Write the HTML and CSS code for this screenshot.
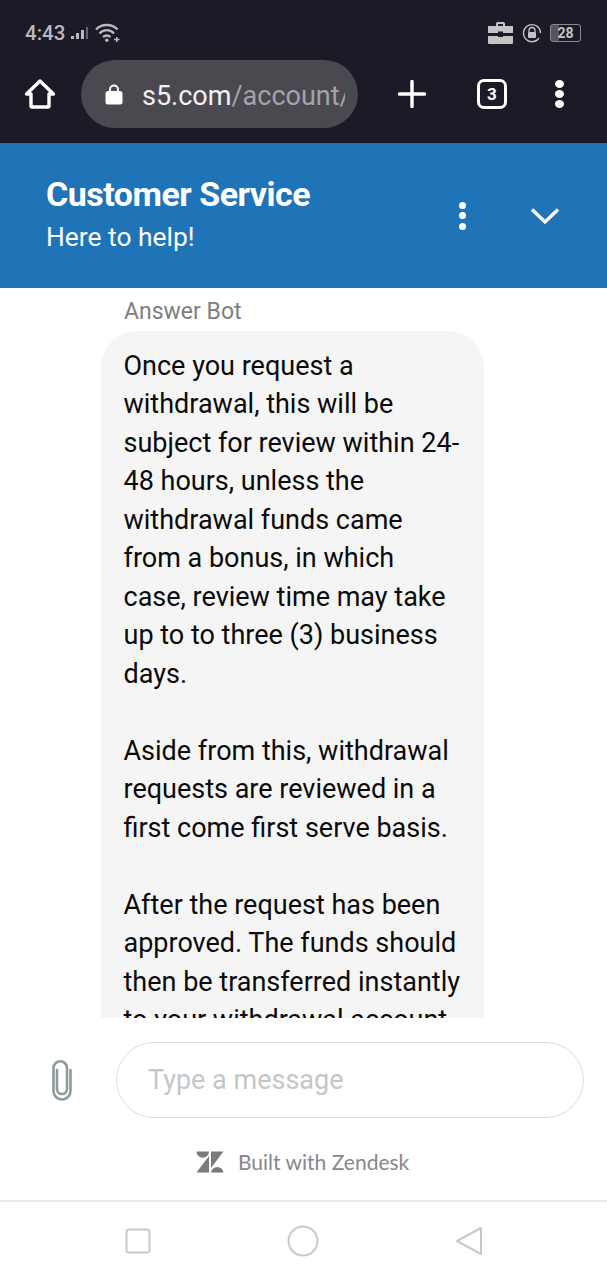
FILE: index.html
```html
<!DOCTYPE html>
<html lang="en">
<head>
  <meta charset="UTF-8">
  <meta name="viewport" content="width=device-width, initial-scale=1.0">
  <title>Customer Service</title>
  <link rel="stylesheet" href="styles.css">
</head>
<body>
  <div class="browser">
    <div class="status">
      <div class="status-side">
        <span class="time">4:43</span>
        <svg class="signal" width="18" height="14" viewBox="0 0 18 14">
          <rect x="0" y="10" width="3" height="3" fill="#b9b9bd"/>
          <rect x="5" y="7" width="3" height="6" fill="#b9b9bd"/>
          <rect x="10" y="4" width="3" height="9" fill="#b9b9bd"/>
          <rect x="15" y="1" width="2" height="12" fill="#66656d"/>
        </svg>
        <svg class="wifi" width="25" height="20" viewBox="0 0 25 20" fill="none" stroke="#b9b9bd" stroke-width="2.3">
          <path d="M1 6.5 C6.5 0.5 17 0.5 22.5 6.5"/>
          <path d="M4.5 10.5 C8.5 6 15 6 19 10.5"/>
          <path d="M8 14 C10.5 12 13 12 15.5 14"/>
          <circle cx="11.8" cy="17.2" r="1.7" fill="#b9b9bd" stroke="none"/>
          <path d="M19 16.5 H24.5 M21.8 14 V19" stroke-width="1.6"/>
        </svg>
      </div>
      <div class="status-side status-right">
        <svg width="27" height="24" viewBox="0 0 27 24">
          <path d="M9 5 V2.5 Q9 1 10.5 1 H16.5 Q18 1 18 2.5 V5 H16 V3 H11 V5 Z" fill="#c4c4c7"/>
          <path d="M1 5 H26 V12 H16 V10.5 H11 V12 H1 Z" fill="#c4c4c7"/>
          <path d="M1 15 H11 V16 H16 V15 H26 V22 Q26 23 25 23 H2 Q1 23 1 22 Z" fill="#c4c4c7"/>
        </svg>
        <svg class="rotate" width="20" height="20" viewBox="0 0 20 20" fill="none" stroke="#c4c4c7" stroke-width="1.4">
          <path d="M17 15 A8.5 8.5 0 1 1 18.5 10"/>
          <path d="M7 9 V7.5 A3 3 0 0 1 13 7.5 V9" stroke-width="1.3"/>
          <rect x="6" y="9" width="8" height="6" rx="1" fill="#c4c4c7" stroke="none"/>
        </svg>
        <div class="battery"><span class="battery-num">28</span></div>
      </div>
    </div>
    <div class="toolbar">
      <svg class="home" width="32" height="32" viewBox="0 0 32 32" fill="none" stroke="#fff" stroke-width="3.4" stroke-linejoin="round">
        <path d="M2.5 16 L16 3 L29.5 16 H25 V28 Q25 29 24 29 H8 Q7 29 7 28 V16 Z"/>
      </svg>
      <div class="url">
        <svg width="18" height="22" viewBox="0 0 18 22">
          <path d="M5 10 V6.5 A4 4 0 0 1 13 6.5 V10" fill="none" stroke="#fff" stroke-width="2"/>
          <rect x="0.5" y="8" width="17" height="13.5" rx="2.5" fill="#fff"/>
        </svg>
        <span class="url-text"><span class="url-host">s5.com</span>/account/</span>
      </div>
      <svg class="plus" width="28" height="28" viewBox="0 0 28 28" stroke="#fff" stroke-width="3.4" stroke-linecap="round">
        <path d="M1.5 14 H26.5 M14 1.5 V26.5"/>
      </svg>
      <div class="tabs">3</div>
      <div class="dots dots-big"><i></i><i></i><i></i></div>
    </div>
  </div>

  <header class="chat-head">
    <div class="chat-titles">
      <h1>Customer Service</h1>
      <p>Here to help!</p>
    </div>
    <div class="dots dots-small"><i></i><i></i><i></i></div>
    <svg class="chevron" width="30" height="18" viewBox="0 0 30 18" fill="none" stroke="#fff" stroke-width="3.4">
      <path d="M2 2.5 L15 15 L28 2.5"/>
    </svg>
  </header>

  <main class="messages">
    <div class="sender">Answer Bot</div>
    <div class="bubble">
      <p>Once you request a withdrawal, this will be subject for review within 24-48 hours, unless the withdrawal funds came from a bonus, in which case, review time may take up to to three (3) business days.</p>
      <p>Aside from this, withdrawal requests are reviewed in a first come first serve basis.</p>
      <p>After the request has been approved. The funds should then be transferred instantly to your withdrawal account</p>
    </div>
  </main>

  <footer class="composer">
    <div class="input-row">
      <svg class="clip" width="26" height="42" viewBox="0 0 26 42" fill="none" stroke="#8f9a9c" stroke-width="2.6" stroke-linecap="round">
        <path d="M8 10 V29 A5 5 0 0 0 18 29 V8 A6.5 6.5 0 0 0 4.5 8 V31 A8.5 8.5 0 0 0 21.5 31 V10" transform="translate(0 1)"/>
      </svg>
      <div class="input">Type a message</div>
    </div>
    <div class="built">
      <svg width="28" height="22" viewBox="0 0 28 22" fill="#7b7b7b">
        <path d="M0.5 0.5 H13 A6.25 6.25 0 0 1 0.5 0.5 Z"/>
        <path d="M13 5 V21.5 H0.5 Z"/>
        <path d="M15 0.5 H27.5 L15 17 Z"/>
        <path d="M15 21.5 A6.3 6.3 0 0 1 27.5 21.5 Z"/>
      </svg>
      <span>Built with Zendesk</span>
    </div>
  </footer>

  <nav class="navbar">
    <svg width="26" height="26" viewBox="0 0 26 26" fill="none" stroke="#c9c9c9" stroke-width="2">
      <rect x="1.5" y="1.5" width="23" height="23" rx="2.5"/>
    </svg>
    <svg width="32" height="32" viewBox="0 0 32 32" fill="none" stroke="#c9c9c9" stroke-width="2">
      <circle cx="16" cy="16" r="14.5"/>
    </svg>
    <svg width="28" height="30" viewBox="0 0 28 30" fill="none" stroke="#c9c9c9" stroke-width="2" stroke-linejoin="round">
      <path d="M26 2 V28 L2 15 Z"/>
    </svg>
  </nav>
</body>
</html>
```

FILE: styles.css
```css
* {
  box-sizing: border-box;
}
body {
  margin: 0;
  height: 1280px;
  display: flex;
  flex-direction: column;
  font-family: Roboto, sans-serif;
  background: #fff;
  overflow: hidden;
}
.browser {
  height: 143px;
  background: #1b1a26;
  flex: none;
}
.status {
  height: 60px;
  padding: 21px 26px 0 25px;
  display: flex;
  justify-content: space-between;
  align-items: flex-start;
}
.status-side {
  display: flex;
  align-items: center;
  gap: 6px;
  height: 24px;
}
.status-right {
  gap: 8px;
}
.time {
  color: #b9b9bd;
  font-size: 20.5px;
  font-weight: 500;
}
.battery {
  width: 31px;
  height: 18px;
  border: 1px solid #8a8a8e;
  border-radius: 3px;
  background: linear-gradient(to right, #55555a 28%, transparent 28%);
  display: flex;
  align-items: center;
  justify-content: center;
}
.battery-num {
  color: #c4c4c7;
  font-size: 14px;
  font-weight: 700;
}
.toolbar {
  height: 68px;
  padding-left: 24px;
  display: flex;
  align-items: center;
}
.url {
  width: 277px;
  height: 68px;
  margin-left: 25px;
  padding-left: 24px;
  border-radius: 34px;
  background: #4a4950;
  display: flex;
  align-items: center;
  gap: 19px;
  overflow: hidden;
  flex: none;
}
.url-text {
  color: #a4a4a8;
  font-size: 27px;
  line-height: 36px;
  padding-top: 3px;
  white-space: nowrap;
  overflow: hidden;
  width: 203px;
  flex: none;
}
.url-host {
  color: #f2f2f2;
}
.plus {
  margin-left: 40px;
}
.tabs {
  width: 30px;
  height: 30px;
  margin-left: 51px;
  border: 3.5px solid #fff;
  border-radius: 7px;
  color: #fff;
  font-size: 17px;
  font-weight: 700;
  display: flex;
  align-items: center;
  justify-content: center;
}
.dots {
  display: flex;
  flex-direction: column;
}
.dots i {
  display: block;
  background: #fff;
  border-radius: 50%;
}
.dots-big {
  margin-left: 48px;
  gap: 2px;
}
.dots-big i {
  width: 9px;
  height: 8px;
}
.chat-head {
  height: 145px;
  flex: none;
  background: #1f73b7;
  color: #fff;
  padding: 0 46px;
  display: flex;
  align-items: center;
}
.chat-titles {
  width: 413px;
}
.chat-titles h1 {
  margin: -2px 0 0;
  font-size: 34px;
  font-weight: 700;
  letter-spacing: -0.5px;
  line-height: 40px;
}
.chat-titles p {
  margin: 5px 0 0;
  font-size: 26.4px;
  line-height: 36px;
}
.dots-small {
  gap: 3.5px;
}
.dots-small i {
  width: 7px;
  height: 7px;
}
.chevron {
  margin-left: 64px;
}
.messages {
  height: 730px;
  flex: none;
  overflow: hidden;
  padding-left: 101px;
}
.sender {
  margin: 9px 0 0 23px;
  color: #7b7f84;
  font-size: 23px;
  line-height: 30px;
}
.bubble {
  width: 383px;
  margin-top: 4px;
  padding: 15.5px 22.5px;
  background: #f5f5f5;
  border-radius: 36px;
  color: #0a0a0a;
  font-size: 27px;
  line-height: 38.5px;
}
.bubble p {
  margin: 0 0 38.5px;
}
.composer {
  height: 182px;
  flex: none;
  padding: 24px 23px 0 49px;
}
.input-row {
  display: flex;
  align-items: center;
}
.clip {
  flex: none;
}
.input {
  width: 468px;
  height: 76px;
  margin-left: 41px;
  padding-left: 31px;
  border: 1.5px solid #dcdcdc;
  border-radius: 38px;
  color: #c4c6c8;
  font-size: 27px;
  display: flex;
  align-items: center;
}
.built {
  margin-top: 31px;
  padding-left: 147px;
  display: flex;
  align-items: center;
  gap: 14px;
  color: #85888c;
  font-family: Lato, sans-serif;
  font-size: 21px;
}
.navbar {
  height: 80px;
  flex: none;
  border-top: 2px solid #e9e9e9;
  display: flex;
  align-items: center;
  padding: 0 124px 0 125px;
  justify-content: space-between;
}
```
